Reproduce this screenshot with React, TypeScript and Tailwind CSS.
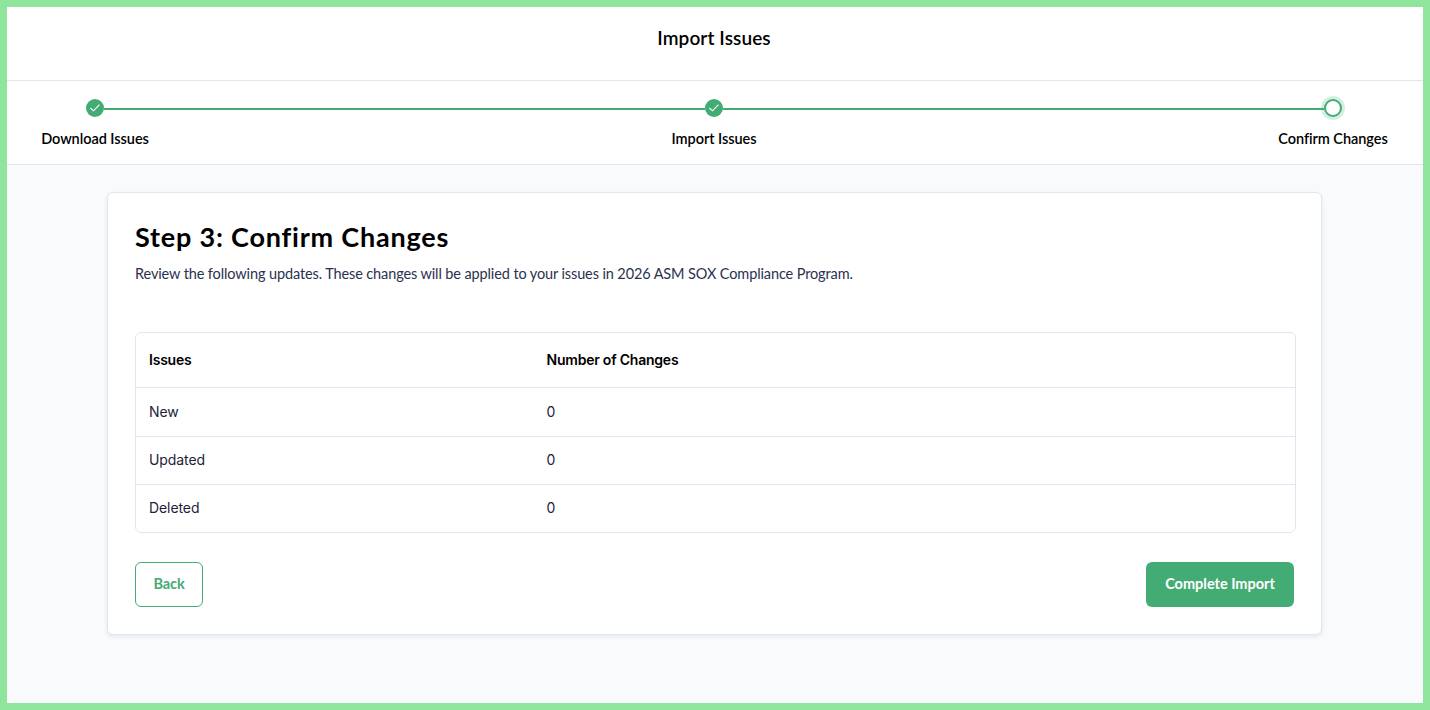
import { Fragment } from 'react';

const steps = [
  { label: 'Download Issues', done: true },
  { label: 'Import Issues', done: true },
  { label: 'Confirm Changes', done: false },
];

const rows = [
  { name: 'New', count: 0 },
  { name: 'Updated', count: 0 },
  { name: 'Deleted', count: 0 },
];

function StepDot({ done }: { done: boolean }) {
  if (!done) {
    return (
      <div className="size-[18px] shrink-0 rounded-full border-2 border-[#43ab74] bg-white shadow-[0_0_0_3px_#d6eee1]" />
    );
  }

  return (
    <div className="flex size-[18px] shrink-0 items-center justify-center rounded-full bg-[#43ab74]">
      <svg width="18" height="18" viewBox="0 0 18 18" fill="none" stroke="white" strokeWidth="1.1">
        <path d="M4.4 9 7.5 11.8 13.5 5.6" />
      </svg>
    </div>
  );
}

function Stepper() {
  return (
    <div className="h-[84px] border-b border-[#e1e5ef] bg-white pt-[18px]">
      <div className="flex items-center pr-[81px] pl-[79px]">
        {steps.map((step, i) => (
          <Fragment key={step.label}>
            {/* the line stays above the halo of the current step */}
            {i > 0 && <div className="relative z-10 mt-px h-0.5 flex-1 bg-[#43ab74]" />}
            <StepDot done={step.done} />
          </Fragment>
        ))}
      </div>
      <div className="mt-3 flex justify-between pr-[30px] pl-7">
        {steps.map(step => (
          <div
            key={step.label}
            className="w-[120px] text-center text-[14.5px] leading-5 font-semibold tracking-[-0.05px] whitespace-nowrap text-black"
          >
            {step.label}
          </div>
        ))}
      </div>
    </div>
  );
}

function ChangesTable() {
  return (
    <div className="mr-[-2px] overflow-hidden rounded-md border border-[#e1e5ef] font-[Inter,sans-serif] text-sm">
      <div className="flex h-[54px] items-center pl-[13px] font-semibold tracking-[-0.22px] text-black">
        <div className="w-[397.5px]">Issues</div>
        <div>Number of Changes</div>
      </div>
      {rows.map(row => (
        <div
          key={row.name}
          className="flex h-12 items-center border-t border-[#e1e5ef] pb-px pl-[13px] tracking-[-0.08px] text-[#1d2338] nth-2:h-[49px]"
        >
          <div className="w-[397.5px]">{row.name}</div>
          <div>{row.count}</div>
        </div>
      ))}
    </div>
  );
}

export default function App() {
  return (
    <div className="flex h-[710px] w-[1430px] flex-col border-[7px] border-[#90e59c] bg-[#f8fafc] font-[Lato,sans-serif]">
      <header className="flex h-[74px] justify-center border-b border-[#e1e5ef] bg-white pt-[17px] pr-0.5">
        <h1 className="text-[19px] leading-7 font-semibold tracking-[0.1px] text-black">Import Issues</h1>
      </header>

      <Stepper />

      <main className="mt-[27px] ml-[100px] h-[443px] w-[1215px] rounded-md border border-[#e1e5ef] bg-white px-[27px] pt-[26px] shadow-[0_2px_4px_rgba(30,41,59,0.08)]">
        <h2 className="text-[27px] leading-9 font-bold tracking-[0.8px] text-black">Step 3: Confirm Changes</h2>
        <p className="mt-[9px] mb-[48px] text-[14.5px] leading-5 tracking-[-0.115px] text-[#2b3150]">
          Review the following updates. These changes will be applied to your issues in 2026 ASM SOX Compliance Program.
        </p>

        <ChangesTable />

        <div className="mt-[29px] flex justify-between">
          <button className="h-[45px] w-[68px] rounded-md border border-[#43ab74] pb-0.5 text-[14.5px] font-bold tracking-[-0.1px] text-[#43ab74]">
            Back
          </button>
          <button className="h-[45px] w-[148px] rounded-md bg-[#43ab74] pb-0.5 text-[14.5px] font-bold text-white">
            Complete Import
          </button>
        </div>
      </main>
    </div>
  );
}
